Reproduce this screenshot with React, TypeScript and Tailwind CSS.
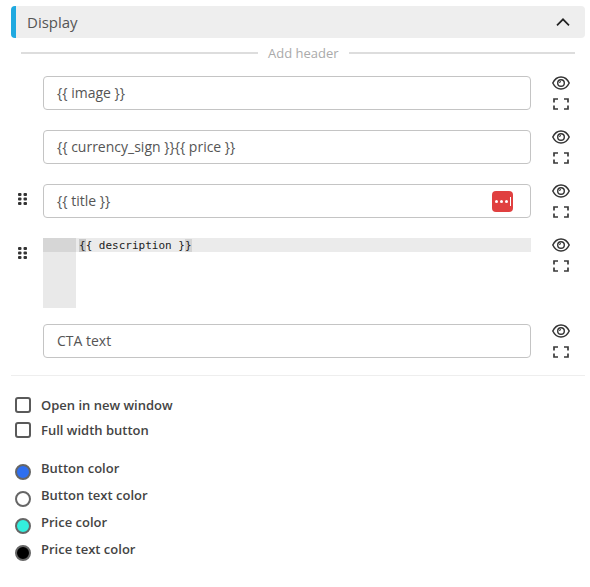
import React from 'react';

function EyeIcon() {
  return (
    <svg width="18" height="14" viewBox="0 0 18 14" fill="none" stroke="#333" className="block">
      <path d="M0.8 7C2.6 3.2 5.4 1 9 1s6.400 2.200 8.200 6c-1.800 3.800-4.600 6-8.200 6S2.600 10.800 0.800 7z" strokeWidth="1.500" />
      <circle cx="9" cy="7" r="3.300" strokeWidth="1.400" />
      <path d="M7.600 7A1.500 1.500 0 0 1 9 5.500" strokeWidth="1.100" />
    </svg>
  );
}

function ExpandIcon() {
  return (
    <svg width="16" height="12" viewBox="0 0 16 12" fill="none" stroke="#3a3a3a" strokeWidth="1.700" className="block">
      <path d="M5 1H1v3.500M11 1h4v3.500M1 7.500V11h4M15 7.500V11h-4" />
    </svg>
  );
}

function DragHandle() {
  return (
    <svg width="10" height="12" viewBox="0 0 10 12" fill="#333" className="block">
      <rect x="0" y="0" width="3.500" height="3" rx="1" />
      <rect x="5.500" y="0" width="3.500" height="3" rx="1" />
      <rect x="0" y="4.500" width="3.500" height="3" rx="1" />
      <rect x="5.500" y="4.500" width="3.500" height="3" rx="1" />
      <rect x="0" y="9" width="3.500" height="3" rx="1" />
      <rect x="5.500" y="9" width="3.500" height="3" rx="1" />
    </svg>
  );
}

function RowActions() {
  return (
    <div className="ml-[21px] flex h-[34px] w-[18px] flex-col items-center gap-[8px]">
      <EyeIcon />
      <ExpandIcon />
    </div>
  );
}

function FieldRow({ value, draggable, lastpass }: { value: string; draggable?: boolean; lastpass?: boolean }) {
  return (
    <div className="flex items-start">
      <div className="flex h-[30px] w-[32px] items-center pl-[7px]">{draggable && <DragHandle />}</div>
      <div className="flex h-[34px] w-[488px] items-center justify-between rounded border border-[#c4c4c4] bg-white pl-[13px] pr-[17px] text-[14px] text-[#555]">
        <span className="pb-[2px]">{value}</span>
        {lastpass && (
          <span className="flex h-[21px] w-[21px] items-center justify-center gap-[2px] rounded-[4px] bg-[#e04040]">
            <span className="h-[3px] w-[3px] rounded-full bg-white" />
            <span className="h-[3px] w-[3px] rounded-full bg-white" />
            <span className="h-[3px] w-[3px] rounded-full bg-white" />
            <span className="h-[9px] w-[1px] bg-white" />
          </span>
        )}
      </div>
      <RowActions />
    </div>
  );
}

function CheckRow({ label }: { label: string }) {
  return (
    <label className="flex h-[16px] items-center">
      <span className="h-[16px] w-[16px] rounded-[3px] border-2 border-[#5a5a5a] bg-white" />
      <span className="ml-[10px] pt-[2px] text-[13px] font-semibold text-[#444]">{label}</span>
    </label>
  );
}

function ColorRow({ label, color }: { label: string; color: string }) {
  return (
    <div className="flex h-[27px] items-start">
      <span className="mt-[6px] h-[16px] w-[16px] rounded-full border-2 border-[#666]" style={{ backgroundColor: color }} />
      <span className="ml-[10px] mt-[1px] text-[13px] leading-[18px] font-semibold text-[#444]">{label}</span>
    </div>
  );
}

export default function App() {
  return (
    <div className="h-[587px] w-[590px] bg-white pl-[11px] pt-[6px] font-['Open_Sans',sans-serif]">
      <div className="w-[574px]">
        <div className="flex h-[32px] items-center justify-between rounded-[4px] border-l-[5px] border-[#1fa9e0] bg-[#eeeeee] pl-[11px] pr-[15px]">
          <span className="text-[15px] text-[#555]">Display</span>
          <svg width="14" height="8" viewBox="0 0 14 8" fill="none" stroke="#222" strokeWidth="1.700">
            <path d="M1 7.300l6-6 6 6" />
          </svg>
        </div>

        <div className="mt-[5px] flex h-[20px] items-center pl-[10px] pr-[10px]">
          <div className="h-[2px] w-[237px] bg-[#dddddd]" />
          <span className="mx-[10px] pt-[2px] text-[13px] text-[#aaa]">Add header</span>
          <div className="h-[2px] flex-1 bg-[#dddddd]" />
        </div>

        <div className="mt-[13px] flex flex-col gap-[20px]">
          <FieldRow value="{{ image }}" />
          <FieldRow value="{{ currency_sign }}{{ price }}" />
          <FieldRow value="{{ title }}" draggable lastpass />

          <div className="flex items-start">
            <div className="flex h-[30px] w-[32px] items-center pl-[7px]"><DragHandle /></div>
            <div className="flex h-[70px] w-[488px]">
              <div className="h-full w-[33px] bg-[#e9e9e9]">
                <div className="h-[14px] bg-[#d6d6d6]" />
              </div>
              <div className="h-[14px] flex-1 bg-[#ebebeb] pl-[3px] font-['DejaVu_Sans_Mono',monospace] text-[11px] leading-[16px] text-[#222]">
                <span className="bg-[#c8c8c8]">{'{'}</span>{'{ description }'}<span className="bg-[#d4d4d4]">{'}'}</span>
              </div>
            </div>
            <RowActions />
          </div>
        </div>

        <div className="mt-[16px]">
          <FieldRow value="CTA text" />
        </div>

        <div className="mt-[17px] h-[1px] bg-[#eeeeee]" />

        <div className="mt-[21px] flex flex-col gap-[9px] pl-[4px]">
          <CheckRow label="Open in new window" />
          <CheckRow label="Full width button" />
        </div>

        <div className="mt-[20px] flex flex-col pl-[4px]">
          <ColorRow label="Button color" color="#2f6fef" />
          <ColorRow label="Button text color" color="#ffffff" />
          <ColorRow label="Price color" color="#33eedd" />
          <ColorRow label="Price text color" color="#000000" />
        </div>
      </div>
    </div>
  );
}
